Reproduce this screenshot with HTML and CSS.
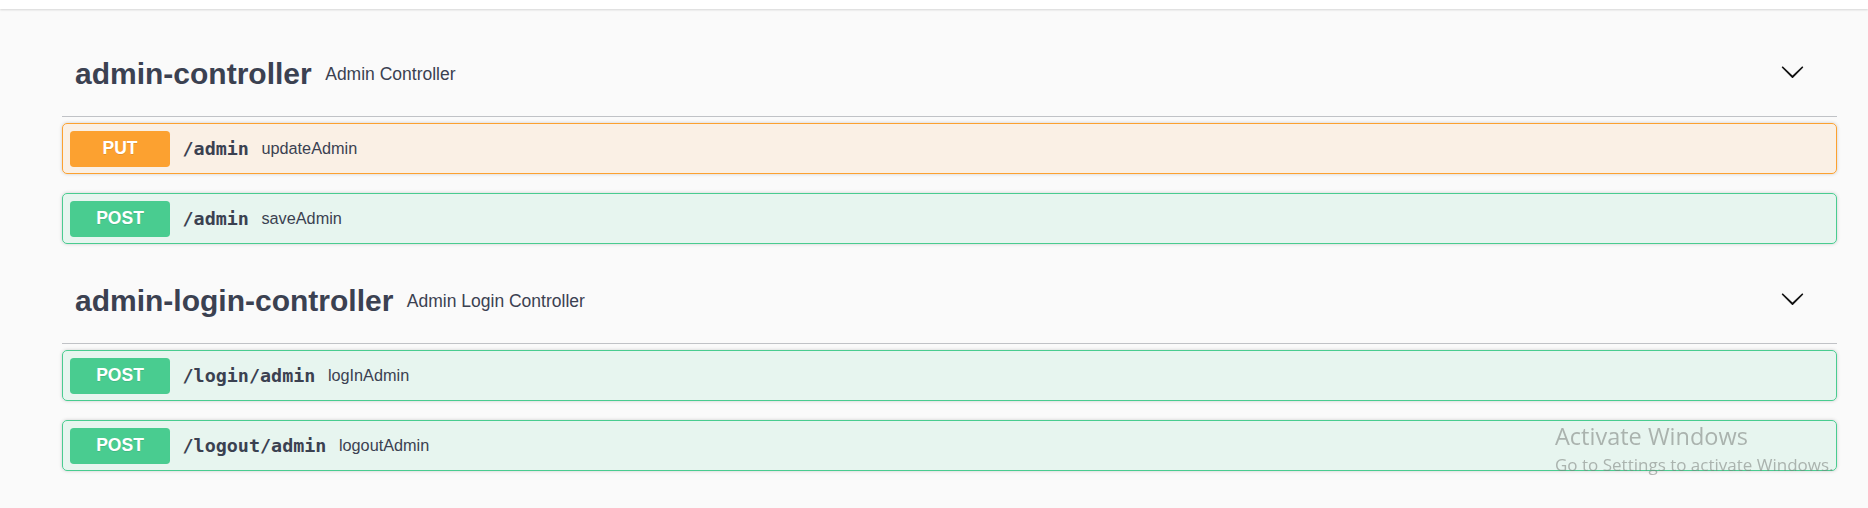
FILE: index.html
```html
<!DOCTYPE html>
<html lang="en">
<head>
<meta charset="utf-8">
<title>Swagger UI</title>
<link rel="stylesheet" href="styles.css">
</head>
<body>
<div class="topbar"></div>
<main class="wrapper">
  <section class="tag-section">
    <h3 class="tag">
      <span class="tag-name">admin-controller</span>
      <small class="tag-desc">Admin Controller</small>
      <button class="expand" aria-label="collapse">
        <svg width="25" height="25" viewBox="0 0 20 20"><path d="M17.418 6.109c.272-.268.709-.268.979 0s.271.701 0 .969l-7.908 7.83c-.27.268-.707.268-.979 0l-7.908-7.830c-.27-.268-.27-.701 0-.969.271-.268.709-.268.979 0L10 13.25l7.418-7.141z"/></svg>
      </button>
    </h3>
    <div class="opblock put">
      <span class="method">PUT</span>
      <span class="path">/admin</span>
      <span class="summary">updateAdmin</span>
    </div>
    <div class="opblock post">
      <span class="method">POST</span>
      <span class="path">/admin</span>
      <span class="summary">saveAdmin</span>
    </div>
  </section>
  <section class="tag-section">
    <h3 class="tag">
      <span class="tag-name">admin-login-controller</span>
      <small class="tag-desc">Admin Login Controller</small>
      <button class="expand" aria-label="collapse">
        <svg width="25" height="25" viewBox="0 0 20 20"><path d="M17.418 6.109c.272-.268.709-.268.979 0s.271.701 0 .969l-7.908 7.83c-.27.268-.707.268-.979 0l-7.908-7.830c-.27-.268-.27-.701 0-.969.271-.268.709-.268.979 0L10 13.25l7.418-7.141z"/></svg>
      </button>
    </h3>
    <div class="opblock post">
      <span class="method">POST</span>
      <span class="path">/login/admin</span>
      <span class="summary">logInAdmin</span>
    </div>
    <div class="opblock post">
      <span class="method">POST</span>
      <span class="path">/logout/admin</span>
      <span class="summary">logoutAdmin</span>
    </div>
  </section>
</main>
<div class="activate">
  <div class="activate-title">Activate Windows</div>
  <div class="activate-sub">Go to Settings to activate Windows.</div>
</div>
</body>
</html>
```
FILE: styles.css
```css
html, body {
  margin: 0;
  padding: 0;
}
body {
  background: #fafafa;
  font-family: "Liberation Sans", Arial, sans-serif;
  color: #3b4151;
  width: 1868px;
  height: 508px;
  overflow: hidden;
}
.topbar {
  height: 9px;
  background: #fff;
  box-shadow: 0 1px 2px 0 rgba(0, 0, 0, 0.15);
}
.wrapper {
  padding: 27px 31px 0 62px;
}
.tag-section {
  display: flex;
  flex-direction: column;
}
.tag {
  box-sizing: border-box;
  height: 81px;
  margin: 0 0 6px;
  padding: 0 32px 4px 13px;
  display: flex;
  align-items: center;
  border-bottom: 1px solid rgba(59, 65, 81, 0.3);
  font-size: 30px;
  font-weight: bold;
  color: #3b4151;
}
.tag-name {
  white-space: nowrap;
}
.tag-desc {
  flex: 1;
  margin-left: 13.5px;
  font-size: 17.5px;
  font-weight: normal;
  color: #3b4151;
}
.expand {
  border: none;
  background: none;
  padding: 0;
  margin: 0 0 4.5px;
  width: 25px;
  height: 25px;
  display: flex;
}
.expand svg {
  fill: #111;
}
.opblock {
  box-sizing: border-box;
  height: 51px;
  margin: 0 0 19px;
  padding: 6.5px 7px;
  display: flex;
  align-items: center;
  border: 1px solid;
  border-radius: 5px;
  box-shadow: 0 0 3.75px rgba(0, 0, 0, 0.19);
}
.opblock.put {
  background: rgba(252, 161, 48, 0.1);
  border-color: #fca130;
}
.opblock.post {
  background: rgba(73, 204, 144, 0.1);
  border-color: #49cc90;
}
.method {
  box-sizing: border-box;
  width: 100px;
  height: 36px;
  display: flex;
  align-items: center;
  justify-content: center;
  border-radius: 3.75px;
  color: #fff;
  font-size: 17.5px;
  font-weight: bold;
  text-shadow: 0 1px 0 rgba(0, 0, 0, 0.1);
}
.put .method {
  background: #fca130;
}
.post .method {
  background: #49cc90;
}
.path {
  padding: 0 12.5px;
  font-family: "DejaVu Sans Mono", "Liberation Mono", monospace;
  font-size: 18.4px;
  font-weight: bold;
  color: #3b4151;
}
.summary {
  font-size: 16.25px;
  color: #3b4151;
}
.activate {
  position: fixed;
  left: 1555px;
  top: 420px;
  color: rgba(120, 124, 120, 0.55);
  font-family: "Open Sans", "Noto Sans", sans-serif;
  white-space: nowrap;
  pointer-events: none;
}
.activate-title {
  font-size: 23.5px;
  line-height: 32px;
}
.activate-sub {
  font-size: 17px;
  line-height: 25px;
}
```
